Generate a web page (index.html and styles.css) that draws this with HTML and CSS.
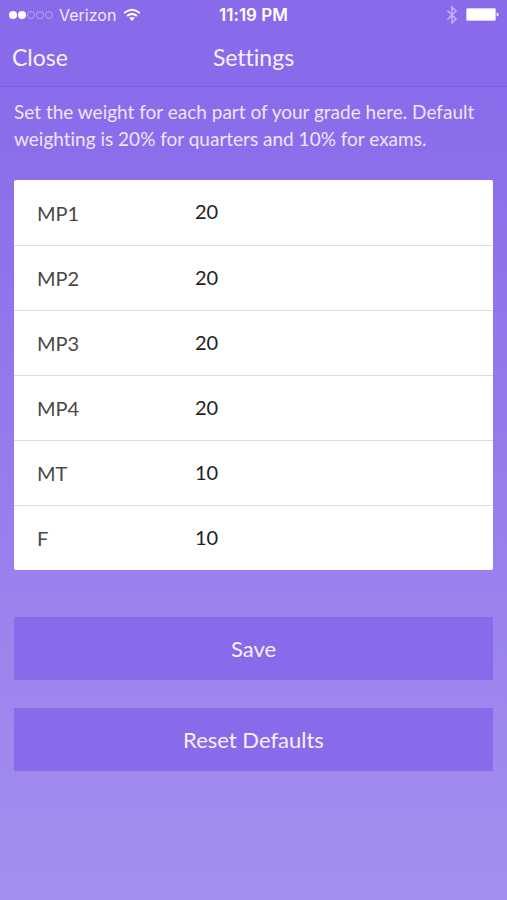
FILE: index.html
```html
<!DOCTYPE html>
<html lang="en">
<head>
  <meta charset="UTF-8">
  <meta name="viewport" content="width=device-width, initial-scale=1.0">
  <title>Settings</title>
  <link rel="stylesheet" href="styles.css">
</head>
<body>

<header class="top">
  <!-- Phone status bar -->
  <div class="status-bar">
    <div class="carrier">
      <svg class="signal" width="46" height="10" viewBox="0 0 46 10" aria-hidden="true">
        <circle class="on" cx="5" cy="5" r="4"/>
        <circle class="on" cx="14" cy="5" r="4"/>
        <circle class="off" cx="23" cy="5" r="3.5"/>
        <circle class="off" cx="32" cy="5" r="3.5"/>
        <circle class="off" cx="41" cy="5" r="3.5"/>
      </svg>
      <span>Verizon</span>
      <svg class="wifi" width="18" height="14" viewBox="0 0 18 14" aria-hidden="true">
        <path d="M1.2 5Q9-1.6 16.8 5M4.1 7.9Q9 4 13.9 7.9" fill="none" stroke="#fff" stroke-width="2"/>
        <path d="M6.2 10Q9 7.9 11.8 10L9 13Z" fill="#fff"/>
      </svg>
    </div>
    <time class="clock">11:19 PM</time>
    <div class="power">
      <svg width="12" height="20" viewBox="0 0 12 20" aria-hidden="true">
        <path d="M1.5 5.5L10 14L6 18V2L10 6L1.5 14.5" fill="none" stroke="#c3b3f6" stroke-width="1.5"/>
      </svg>
      <svg width="33" height="14" viewBox="0 0 33 14" aria-hidden="true">
        <rect x="0.5" y="0.5" width="29" height="12" rx="1" fill="#fff" stroke="#d8ccfa"/>
        <path d="M30.5 4.5Q33 5 33 6.5T30.5 8.5Z" fill="#e9e2fd"/>
      </svg>
    </div>
  </div>

  <nav class="nav-bar">
    <button type="button" class="close">Close</button>
    <h1>Settings</h1>
  </nav>
</header>

<main>
  <p class="intro">Set the weight for each part of your grade here. Default weighting is 20% for quarters and 10% for exams.</p>

  <form>
    <div class="weights">
      <div class="row">
        <label for="mp1">MP1</label>
        <input type="text" inputmode="numeric" id="mp1" value="20">
      </div>
      <div class="row">
        <label for="mp2">MP2</label>
        <input type="text" inputmode="numeric" id="mp2" value="20">
      </div>
      <div class="row">
        <label for="mp3">MP3</label>
        <input type="text" inputmode="numeric" id="mp3" value="20">
      </div>
      <div class="row">
        <label for="mp4">MP4</label>
        <input type="text" inputmode="numeric" id="mp4" value="20">
      </div>
      <div class="row">
        <label for="mt">MT</label>
        <input type="text" inputmode="numeric" id="mt" value="10">
      </div>
      <div class="row">
        <label for="final">F</label>
        <input type="text" inputmode="numeric" id="final" value="10">
      </div>
    </div>

    <div class="actions">
      <button type="submit">Save</button>
      <button type="reset">Reset Defaults</button>
    </div>
  </form>
</main>

</body>
</html>
```
FILE: styles.css
```css
* {
  box-sizing: border-box;
}

body {
  margin: 0;
  min-height: 100vh;
  background: linear-gradient(#896aeb, #8a6beb 10%, #a48fee);
  font-family: Lato, "Liberation Sans", sans-serif;
  font-variant-ligatures: none;
  color: #fff;
}

button,
input {
  font-family: inherit;
  border: none;
  border-radius: 0;
}

button {
  color: #f6efff;
  font-size: 22px;
  cursor: pointer;
}

.top {
  background-color: #896aea;
  border-bottom: 1px solid #7a5bdc;
}

/* Status bar */
.status-bar {
  display: grid;
  grid-template-columns: 1fr auto 1fr;
  align-items: center;
  height: 30px;
  padding: 0 8px;
  font-family: Inter, "Liberation Sans", sans-serif;
  font-size: 16px;
}

.carrier {
  display: flex;
  align-items: center;
  gap: 5px;
  color: #f3ecff;
}

.wifi {
  margin-left: 2px;
}

.signal .on {
  fill: #fff;
}

.signal .off {
  fill: none;
  stroke: #b5a2f4;
}

.clock {
  font-size: 17px;
  font-weight: 600;
}

.power {
  display: flex;
  justify-content: flex-end;
  align-items: center;
  gap: 8px;
}

/* Title bar */
.nav-bar {
  display: grid;
  grid-template-columns: 1fr auto 1fr;
  align-items: center;
  height: 56px;
  padding: 0 12px 2px;
}

.nav-bar h1 {
  margin: 0;
  color: #f6efff;
  font-size: 23px;
  font-weight: 400;
}

.close {
  justify-self: start;
  padding: 0;
  background: none;
  font-size: 23px;
}

main {
  padding: 11px 14px 24px;
}

.intro {
  margin: 0 0 28px;
  color: #eee5ff;
  font-size: 19px;
  line-height: 27px;
}

/* Grade weights */
.weights {
  overflow: hidden;
  background-color: #fff;
  border-radius: 2px;
}

.row {
  display: grid;
  grid-template-columns: 158px 1fr;
  align-items: center;
  height: 65px;
  padding: 0 23px;
  color: #484848;
}

.row + .row {
  border-top: 1px solid #dcdce0;
}

.row label {
  font-size: 20px;
}

.row input {
  width: 100%;
  padding: 0 0 3px;
  background: none;
  color: #222;
  font-size: 20px;
}

/* Buttons */
.actions {
  display: grid;
  gap: 28px;
  margin-top: 47px;
}

.actions button {
  height: 63px;
  background-color: #896aea;
}
```
